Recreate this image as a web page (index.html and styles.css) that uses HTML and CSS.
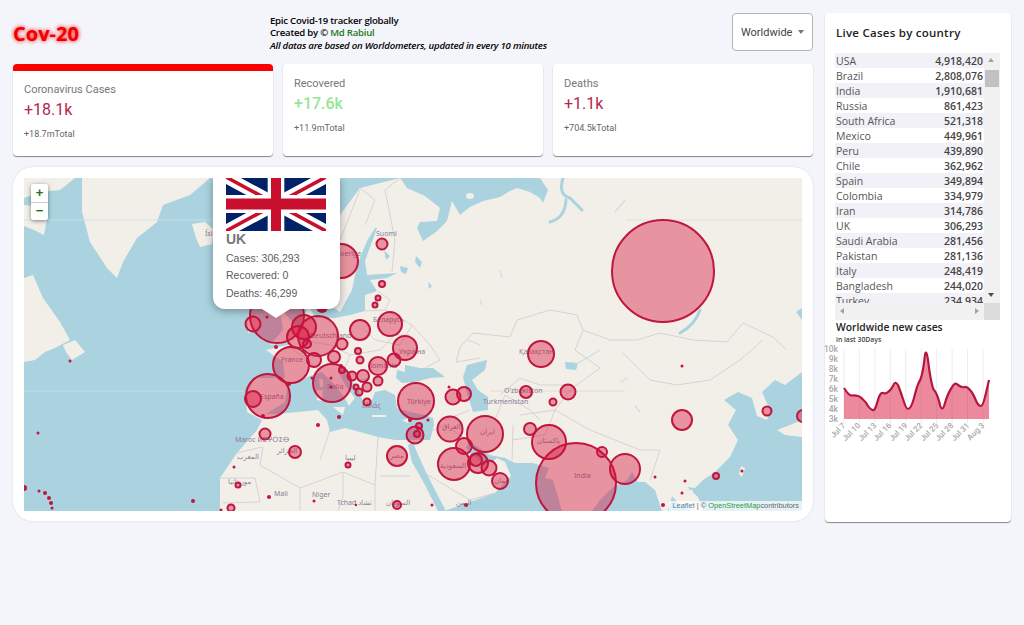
FILE: index.html
```html
<!DOCTYPE html>
<html lang="en">
<head>
<meta charset="utf-8">
<title>Cov-20</title>
<link rel="stylesheet" href="styles.css">
</head>
<body>
<div class="app">
  <main class="left">
    <header class="header">
      <h1 class="brand">Cov-20</h1>
      <div class="intro">
        <div>Epic Covid-19 tracker globally</div>
        <div>Created by © <span class="author">Md Rabiul</span></div>
        <div class="note">All datas are based on Worldometers, updated in every 10 minutes</div>
      </div>
      <div class="select">Worldwide <span class="caret"></span></div>
    </header>
    <section class="stats">
      <article class="stat stat-active">
        <div class="stat-label">Coronavirus Cases</div>
        <div class="stat-value">+18.1k</div>
        <div class="stat-total">+18.7mTotal</div>
      </article>
      <article class="stat">
        <div class="stat-label">Recovered</div>
        <div class="stat-value green">+17.6k</div>
        <div class="stat-total">+11.9mTotal</div>
      </article>
      <article class="stat">
        <div class="stat-label">Deaths</div>
        <div class="stat-value">+1.1k</div>
        <div class="stat-total">+704.5kTotal</div>
      </article>
    </section>
    <section class="map-card">
      <div class="map">
        <svg class="map-svg" viewBox="24 178 778 333" width="778" height="333" aria-label="World map">
          <g class="base">
          <path class="land" d="M400 178 L407 188 L425 196 L440 208 L437 221 L420 222 L417 228 L423 241 L436 232 L447 221 L452 201 L460 215 L470 207 L483 201 L500 197 L510 191 L517 188 L530 192 L540 198 L543 203 L548 190 L540 178 L802 178 L802 308 L796 312 L802 320 L802 372 L785 385 L775 380 L762 392 L770 410 L767 420 L757 416 L752 398 L738 392 L724 400 L736 410 L728 425 L738 440 L730 457 L715 472 L703 480 L695 488 L687 487 L698 497 L703 511 L690 511 L680 505 L672 496 L668 511 L662 511 L655 490 L645 482 L638 482 L632 472 L627 480 L613 487 L600 500 L592 511 L562 511 L553 480 L545 478 L549 468 L533 463 L515 463 L505 458 L490 455 L478 447 L470 442 L466 447 L470 455 L478 458 L483 465 L492 462 L497 458 L505 462 L511 476 L495 493 L470 502 L447 510 L440 511 L220 511 L220 478 L237 453 L257 430 L262 420 L247 412 L246 395 L255 378 L285 378 L283 362 L266 350 L287 345 L300 335 L303 322 L308 305 L316 318 L335 318 L350 315 L365 311 L365 295 L377 291 L370 280 L387 278 L397 273 L367 275 L365 261 L377 228 L375 228 L367 241 L357 265 L352 290 L340 312 L330 305 L325 295 L318 298 L305 295 L298 275 L310 240 L340 215 L360 188 Z"/>
          <path class="land" d="M82 178 L210 178 L190 195 L163 205 L157 222 L137 238 L123 262 L117 278 L107 268 L90 242 L82 212 Z"/>
          <path class="land" d="M192 224 L205 222 L214 230 L212 244 L200 247 L196 238 Z"/>
          <path class="land" d="M24 278 L33 275 L43 298 L60 322 L70 340 L55 348 L45 352 L35 360 L24 362 Z"/>
          <path class="land" d="M63 345 L75 340 L85 352 L72 360 L66 352 Z"/>
          <path class="land" d="M24 178 L75 178 L60 190 L40 192 L24 198 Z"/>
          <path class="land" d="M24 205 L38 206 L47 218 L44 235 L34 230 L24 226 Z"/>
          <path class="land" d="M280 308 L295 325 L302 335 L290 342 L270 345 L283 330 Z"/>
          <path class="land" d="M247 318 L258 315 L260 330 L248 333 Z"/>
          <path class="land" d="M777 430 L790 425 L802 420 L802 437 L785 435 Z"/>
          <path class="land" d="M741 466 L745 468 L742 477 L739 474 Z"/>
          <path class="land" d="M686 491 L693 490 L693 496 L688 497 Z"/>
          <ellipse class="land" cx="470" cy="196" rx="4" ry="3"/>
          <path class="sea" d="M266 414 L285 402 L288 385 L310 376 L322 372 L335 385 L345 398 L349 406 L345 412 L351 403 L355 398 L347 388 L338 372 L340 366 L350 378 L358 390 L365 405 L372 400 L375 392 L385 390 L395 395 L397 408 L410 412 L425 415 L433 418 L434 425 L430 440 L410 440 L395 440 L378 437 L360 432 L345 428 L330 432 L327 420 L318 410 L277 414 Z"/>
          <path class="land" d="M333 407 L345 407 L343 415 Z M317 390 L323 390 L322 401 L317 400 Z M319 379 L323 379 L323 387 L320 387 Z M372 415 L386 415 L386 417 L372 417 Z M402 420 L410 418 L408 423 Z"/>
          <path class="sea" d="M397 370 L405 372 L405 365 L420 368 L433 368 L445 377 L430 378 L415 382 L402 383 L396 378 Z"/>
          <path class="sea" d="M467 365 L487 360 L485 370 L472 380 L478 390 L488 397 L488 410 L473 412 L467 393 L463 377 Z"/>
          <path class="sea" d="M565 362 L578 363 L576 370 L566 369 Z"/>
          <path class="sea" d="M413 442 L416 450 L425 470 L435 490 L446 511 L438 511 L425 485 L412 462 L408 445 Z"/>
          <path class="sea" d="M400 266 L408 268 L406 274 L401 272 Z M416 256 L422 262 L420 268 L415 262 Z M384 250 L390 256 L386 260 Z M428 282 L432 286 L429 289 Z"/>
          <path class="water-line" d="M563 178 Q558 195 570 198 L582 210 M566 200 Q565 218 550 222"/>
          <path class="water-line" d="M700 310 Q695 325 680 333"/>
          <path class="water-thin" d="M625 200 L615 212 M468 340 L480 345 M575 365 L600 350 M620 382 L628 378 M635 406 L640 412 M480 300 L482 305 M500 270 L502 278"/>
          <path class="lat" d="M24 220 L212 220"/>
          <path class="lat-grey" d="M626 220 L802 220"/>
          <path class="lat" d="M24 391 L244 391"/>
          <path class="lat-grey" d="M490 391 L625 391"/>
          <path class="border" d="M460 347 L473 333 L510 337 L517 320 L550 310 L577 315 L583 330 L610 340 L637 340 L660 333 L693 340 L727 342 L743 323 L773 337 L787 350"/>
          <path class="border" d="M623 353 L650 380 L677 385 L710 380 L740 360 L763 340"/>
          <path class="border" d="M583 330 L575 350 L600 368 L570 390 L555 410 L590 430 L640 450 L660 450 L650 480"/>
          <path class="border" d="M460 347 L456 362 L480 358 M500 395 L520 378 L540 385 L570 385 M495 420 L505 395 L530 410 L540 420 M513 425 L512 460 M520 415 L555 410 L545 435 L512 440"/>
          <path class="border" d="M400 178 L385 190 L395 240 L392 272 M360 188 L375 200 L365 225 M340 240 L360 190"/>
          <path class="border" d="M300 340 L330 345 L350 355 L380 350 L395 335 L410 335 M365 311 L385 310 L412 325 L400 345 L375 340 L365 330 M412 325 L430 345 L440 360 L425 368 M378 291 L390 300 L385 310 M287 345 L310 362 L320 372 M350 355 L345 368 L360 380 L370 378"/>
          <path class="border" d="M260 465 L300 488 L343 472 L375 485 L378 437 M320 460 L330 430 M260 465 L263 447 M220 478 L255 478 L260 502 L223 503 M300 488 L300 511 M343 472 L343 497 L338 511 M375 485 L375 511 M380 476 L410 476 M411 440 L445 425 L470 442 M428 475 L470 500 L495 493 M445 420 L470 410 M237 453 L262 447"/>
          </g>
          <g class="lbl">
            <text x="205" y="236">Ísland</text>
            <text x="376" y="236">Suomi</text>
            <text x="337" y="256">Sverige</text>
            <text x="310" y="338">Deutschland</text>
            <text x="373" y="322">Беларусь</text>
            <text x="399" y="354">Україна</text>
            <text x="281" y="362">France</text>
            <text x="260" y="399">España</text>
            <text x="327" y="389">Italia</text>
            <text x="368" y="368">România</text>
            <text x="362" y="408">Ελλάς</text>
            <text x="407" y="404">Türkiye</text>
            <text x="519" y="354">Қазақстан</text>
            <text x="504" y="393">O'zbekiston</text>
            <text x="483" y="404">Turkmenistan</text>
            <text x="574" y="478">India</text>
            <text x="235" y="442">Maroc ⵍⵎⵖⵔⵉⴱ</text>
            <text x="237" y="459">المغرب</text>
            <text x="277" y="453">الجزائر</text>
            <text x="345" y="460">ليبيا</text>
            <text x="228" y="484">موريتانيا</text>
            <text x="274" y="496">Mali</text>
            <text x="312" y="497">Niger</text>
            <text x="337" y="505">Tchad تشاد</text>
            <text x="386" y="505">السودان</text>
            <text x="390" y="458">مصر</text>
            <text x="442" y="429">العراق</text>
            <text x="480" y="434">ایران</text>
            <text x="440" y="468">السعودية</text>
            <text x="537" y="443">پاکستان</text>
            <text x="494" y="483">عمان</text>
            <text x="456" y="505">اليمن</text>
          </g>
          <g class="dots">
            <circle cx="663" cy="271" r="51"/><circle cx="576" cy="483" r="40"/>
            <circle cx="277" cy="316" r="27"/><circle cx="268" cy="396" r="22"/><circle cx="318" cy="336" r="20"/><circle cx="291" cy="365" r="18"/><circle cx="332" cy="383" r="19"/><circle cx="416" cy="401" r="18"/><circle cx="341" cy="261" r="17"/><circle cx="549" cy="442" r="17"/><circle cx="485" cy="434" r="18"/><circle cx="454" cy="464" r="16"/><circle cx="625" cy="469" r="15"/><circle cx="541" cy="354" r="13"/><circle cx="450" cy="429" r="12.5"/><circle cx="390" cy="324" r="12"/><circle cx="405" cy="348" r="12"/><circle cx="304" cy="327" r="12"/><circle cx="298" cy="337" r="11"/><circle cx="360" cy="330" r="10"/><circle cx="397" cy="456" r="10"/><circle cx="682" cy="420" r="10"/><circle cx="478" cy="463" r="10"/>
            <circle cx="378" cy="366" r="9"/><circle cx="415" cy="435" r="8.5"/><circle cx="253" cy="399" r="8"/><circle cx="464" cy="446" r="8"/><circle cx="500" cy="481" r="8"/><circle cx="253" cy="324" r="7.5"/><circle cx="489" cy="468" r="7.5"/><circle cx="453" cy="397" r="7.5"/><circle cx="568" cy="392" r="7.5"/><circle cx="314" cy="360" r="7"/><circle cx="464" cy="394" r="7"/><circle cx="334" cy="357" r="6"/><circle cx="363" cy="376" r="6"/><circle cx="295" cy="452" r="6"/><circle cx="526" cy="392" r="6"/><circle cx="530" cy="429" r="6"/><circle cx="476" cy="460" r="6"/><circle cx="394" cy="360" r="6.5"/><circle cx="265" cy="434" r="5.5"/><circle cx="342" cy="344" r="5.5"/><circle cx="382" cy="244" r="5.5"/><circle cx="602" cy="452" r="5"/><circle cx="352" cy="376" r="4.5"/><circle cx="378" cy="381" r="4.5"/><circle cx="367" cy="387" r="4.5"/><circle cx="767" cy="411" r="4.5"/><circle cx="803" cy="416" r="6"/><circle cx="397" cy="505" r="4"/><circle cx="307" cy="344" r="4"/>
            <circle cx="360" cy="360" r="3.5"/><circle cx="359" cy="392" r="3.5"/><circle cx="367" cy="402" r="3.5"/><circle cx="553" cy="402" r="3.5"/><circle cx="231" cy="508" r="3.5"/><circle cx="358" cy="351" r="3"/><circle cx="342" cy="370" r="3"/><circle cx="382" cy="284" r="3"/><circle cx="417" cy="434" r="3"/><circle cx="419" cy="426" r="3"/><circle cx="716" cy="476" r="3"/><circle cx="378" cy="298" r="2.5"/><circle cx="375" cy="305" r="2.5"/><circle cx="356" cy="387" r="2.5"/><circle cx="348" cy="465" r="2.5"/><circle cx="238" cy="485" r="2.5"/>
          </g>
          <g class="pins">
            <circle cx="339" cy="417" r="2"/><circle cx="318" cy="425" r="2"/><circle cx="234" cy="467" r="1.5"/><circle cx="269" cy="497" r="2"/><circle cx="314" cy="501" r="1.5"/><circle cx="356" cy="505" r="1.2"/><circle cx="221" cy="510" r="1.5"/><circle cx="193" cy="501" r="2"/><circle cx="70" cy="361" r="1.5"/><circle cx="38" cy="433" r="1.5"/><circle cx="39" cy="491" r="1.5"/><circle cx="45" cy="493" r="2"/><circle cx="49" cy="498" r="2"/><circle cx="51" cy="503" r="2"/><circle cx="52" cy="508" r="1.5"/><circle cx="24" cy="488" r="3"/><circle cx="449" cy="387" r="1.5"/><circle cx="466" cy="505" r="2"/><circle cx="432" cy="505" r="1.5"/><circle cx="428" cy="420" r="1.5"/><circle cx="410" cy="420" r="2"/><circle cx="682" cy="366" r="1.5"/><circle cx="742" cy="471" r="1.5"/><circle cx="655" cy="477" r="1.5"/><circle cx="685" cy="481" r="1.5"/><circle cx="682" cy="493" r="1.5"/><circle cx="663" cy="505" r="2"/><circle cx="267" cy="317" r="1.5"/><circle cx="276" cy="347" r="2"/><circle cx="263" cy="416" r="2"/><circle cx="289" cy="384" r="2"/><circle cx="312" cy="378" r="1.5"/><circle cx="331" cy="378" r="1.5"/><circle cx="331" cy="387" r="1.5"/><circle cx="341" cy="366" r="2"/><circle cx="322" cy="307" r="6"/>
          </g>
        </svg>
        <div class="zoom-ctl">
          <button class="zoom-btn">+</button>
          <button class="zoom-btn">−</button>
        </div>
        <div class="popup">
          <svg class="flag" viewBox="0 0 60 30" preserveAspectRatio="none" aria-label="UK flag">
            <rect class="flag-blue" width="60" height="30"/>
            <path class="flag-white-x" d="M0 0 L60 30 M60 0 L0 30"/>
            <path class="flag-red-x" d="M0 0 L60 30 M60 0 L0 30"/>
            <path class="flag-white-p" d="M30 0 V30 M0 15 H60"/>
            <path class="flag-red-p" d="M30 0 V30 M0 15 H60"/>
          </svg>
          <div class="popup-name">UK</div>
          <div class="popup-line">Cases: 306,293</div>
          <div class="popup-line">Recovered: 0</div>
          <div class="popup-line">Deaths: 46,299</div>
        </div>
        <div class="attrib"><span class="a-leaflet">Leaflet</span> | © <span class="a-osm">OpenStreetMap</span>contributors</div>
      </div>
    </section>
  </main>
  <aside class="side">
    <h2 class="side-title">Live Cases by country</h2>
    <div class="table-box">
      <div class="table-main">
        <div class="rows">
          <div class="row"><span>USA</span><b>4,918,420</b></div>
          <div class="row"><span>Brazil</span><b>2,808,076</b></div>
          <div class="row"><span>India</span><b>1,910,681</b></div>
          <div class="row"><span>Russia</span><b>861,423</b></div>
          <div class="row"><span>South Africa</span><b>521,318</b></div>
          <div class="row"><span>Mexico</span><b>449,961</b></div>
          <div class="row"><span>Peru</span><b>439,890</b></div>
          <div class="row"><span>Chile</span><b>362,962</b></div>
          <div class="row"><span>Spain</span><b>349,894</b></div>
          <div class="row"><span>Colombia</span><b>334,979</b></div>
          <div class="row"><span>Iran</span><b>314,786</b></div>
          <div class="row"><span>UK</span><b>306,293</b></div>
          <div class="row"><span>Saudi Arabia</span><b>281,456</b></div>
          <div class="row"><span>Pakistan</span><b>281,136</b></div>
          <div class="row"><span>Italy</span><b>248,419</b></div>
          <div class="row"><span>Bangladesh</span><b>244,020</b></div>
          <div class="row"><span>Turkey</span><b>234,934</b></div>
        </div>
        <div class="vbar">
          <span class="arrow arrow-up"></span>
          <span class="thumb"></span>
          <span class="arrow arrow-down"></span>
        </div>
      </div>
      <div class="hbar">
        <div class="hbar-track"><span class="arrow arrow-left"></span><span class="arrow arrow-right"></span></div>
        <div class="hbar-corner"></div>
      </div>
    </div>
    <h3 class="chart-title">Worldwide new cases</h3>
    <div class="chart-sub">in last 30Days</div>
    <svg class="chart" viewBox="824 345 177 105" width="177" height="105" aria-label="New cases chart">
      <g class="grid">
        <path d="M844 349V424 M859.4 349V424 M874.9 349V424 M890.3 349V424 M905.8 349V424 M921.2 349V424 M936.7 349V424 M952.1 349V424 M967.6 349V424 M983 349V424"/>
      </g>
      <path class="area" d="M844 388 Q849 396 852 395.5 Q855 395 858 396 Q861 397 863 399.5 Q866 402 868 406 Q870 409 872.5 410 Q875 411.5 877.5 401.5 Q880 392 883 393 Q886 394 888 392 Q891 390 893 386 Q895 380 898 385 Q900 390 903 399 Q906 409 908 409 Q911 409 914 398 Q917 386 919 382 Q922 378 924 363 Q926 340 929 368 Q932 388 934 390 Q937 393 939.5 403 Q942 414 945 403 Q948 393 951.5 388 Q955 381 958 385 Q962 388 964.5 387 Q967 386 970 390 Q973 393 975.5 399.5 Q978 406 981 406 Q983 406 986 393 L989 380 V419 H844 Z"/>
      <path class="curve" d="M844 388 Q849 396 852 395.5 Q855 395 858 396 Q861 397 863 399.5 Q866 402 868 406 Q870 409 872.5 410 Q875 411.5 877.5 401.5 Q880 392 883 393 Q886 394 888 392 Q891 390 893 386 Q895 380 898 385 Q900 390 903 399 Q906 409 908 409 Q911 409 914 398 Q917 386 919 382 Q922 378 924 363 Q926 340 929 368 Q932 388 934 390 Q937 393 939.5 403 Q942 414 945 403 Q948 393 951.5 388 Q955 381 958 385 Q962 388 964.5 387 Q967 386 970 390 Q973 393 975.5 399.5 Q978 406 981 406 Q983 406 986 393 L989 380"/>
      <g class="y-labels">
        <text x="838" y="352">10k</text><text x="838" y="362">9k</text><text x="838" y="372">8k</text><text x="838" y="382">7k</text><text x="838" y="392">6k</text><text x="838" y="402">5k</text><text x="838" y="412">4k</text><text x="838" y="422">3k</text>
      </g>
      <g class="x-labels">
        <text transform="translate(846 426) rotate(-45)">Jul 7</text>
        <text transform="translate(861 426) rotate(-45)">Jul 10</text>
        <text transform="translate(877 426) rotate(-45)">Jul 13</text>
        <text transform="translate(892 426) rotate(-45)">Jul 16</text>
        <text transform="translate(908 426) rotate(-45)">Jul 19</text>
        <text transform="translate(923 426) rotate(-45)">Jul 22</text>
        <text transform="translate(939 426) rotate(-45)">Jul 25</text>
        <text transform="translate(954 426) rotate(-45)">Jul 28</text>
        <text transform="translate(970 426) rotate(-45)">Jul 31</text>
        <text transform="translate(985 426) rotate(-45)">Aug 3</text>
      </g>
    </svg>
  </aside>
</div>
</body>
</html>
```

FILE: styles.css
```css
* { box-sizing: border-box; }
html, body { margin: 0; height: 100%; }
body { background: #f4f5fb; font-family: Roboto, "Liberation Sans", sans-serif; overflow: hidden; }
.app { display: flex; gap: 12px; padding: 13px 13px 0; align-items: flex-start; }
.left { width: 800px; display: flex; flex-direction: column; }

.header { display: flex; align-items: flex-start; height: 38px; margin-bottom: 13px; }
.brand { margin: 8px 0 0; width: 257px; font: 700 20px/26px "Open Sans", sans-serif; color: #ee0000; text-shadow: 0 0 4px #f00; }
.intro { flex: 1; padding-top: 2px; font: 600 9.6px/12.3px "Open Sans", sans-serif; letter-spacing: -.23px; color: #000; }
.author { color: #1b7a1b; }
.note { font-style: italic; }
.select { width: 81px; height: 38px; border: 1px solid #b5b5b5; border-radius: 4px; padding-left: 8px; display: flex; align-items: center; font-size: 11px; color: #444; background: #fff; }
.caret { margin-left: 6px; border: 3.5px solid transparent; border-top: 4px solid #777; border-bottom: 0; }

.stats { display: flex; gap: 10px; margin-bottom: 11px; }
.stat { flex: 1; height: 92px; background: #fff; border-radius: 4px; padding: 13px 11px; box-shadow: 0 1px 1px rgba(0,0,0,.45); }
.stat-active { border-top: 7px solid #f00; padding-top: 12px; }
.stat-label { font-size: 11px; line-height: 13px; color: #777; }
.stat-value { margin-top: 3px; font-size: 16px; line-height: 21px; color: #b3274c; }
.stat-value.green { color: #97e597; font-weight: 500; }
.stat-total { margin-top: 9px; font-size: 9px; line-height: 11px; color: #666; }

.map-card { height: 354px; background: #fff; border-radius: 20px; padding: 11px; box-shadow: 0 0 2px rgba(0,0,0,.15); }
.map { position: relative; width: 778px; height: 333px; overflow: hidden; background: #aad3df; }
.map-svg { display: block; }
.base { filter: blur(.5px); }
.land { fill: #f2efe9; }
.sea { fill: #aad3df; }
.water-line { fill: none; stroke: #aad3df; stroke-width: 3; stroke-linecap: round; }
.water-thin { fill: none; stroke: #c6e0e6; stroke-width: 1.2; }
.lat { fill: none; stroke: #c8e1e8; stroke-width: .8; }
.lat-grey { fill: none; stroke: #dcdad6; stroke-width: .8; }
.border { fill: none; stroke: #d6cdd2; stroke-width: .9; }
.lbl text { font: 7px "Noto Sans", "DejaVu Sans", sans-serif; fill: #8a7c99; }
.dots circle { fill: rgba(220, 20, 60, .42); stroke: #c0153f; stroke-width: 2; }
.pins circle { fill: #c0153f; }

.zoom-ctl { position: absolute; left: 7px; top: 6px; width: 17px; height: 36px; display: flex; flex-direction: column; border-radius: 3px; background: #fff; box-shadow: 0 1px 4px rgba(0,0,0,.45); overflow: hidden; }
.zoom-btn { flex: 1; padding: 0; border: 0; background: #fff; color: #1b6f1b; font: 700 13px/16px "Liberation Sans", sans-serif; }
.zoom-btn + .zoom-btn { border-top: 1px solid #ccc; }

.popup { position: absolute; left: 189px; top: -1px; width: 127px; height: 132px; padding-left: 13px; background: #fff; border-radius: 0 0 12px 12px; box-shadow: 0 2px 8px rgba(0,0,0,.35); font-family: "Liberation Sans", sans-serif; color: #666; }
.popup::after { content: ""; position: absolute; left: 49px; bottom: -9px; border: 14px solid transparent; border-top: 9px solid #fff; border-bottom: 0; }
.flag { display: block; width: 100px; height: 54px; }
.flag-blue { fill: #012169; }
.flag-white-x { fill: none; stroke: #fff; stroke-width: 7; }
.flag-red-x { fill: none; stroke: #c8102e; stroke-width: 2; }
.flag-white-p { fill: none; stroke: #fff; stroke-width: 10; }
.flag-red-p { fill: none; stroke: #c8102e; stroke-width: 6; }
.popup-name { margin-top: 0; font-size: 14px; line-height: 16px; font-weight: 700; color: #777; }
.popup-line { margin-top: 3.5px; font-size: 10.5px; line-height: 14px; color: #5c5c5c; }
.attrib { position: absolute; right: 0; bottom: 0; padding: 0 3px; font: 7.4px/10px "Liberation Sans", sans-serif; color: #666; background: rgba(255,255,255,.7); }
.a-leaflet { color: #4a7fa5; }
.a-osm { color: #2d9a3c; }

.side { width: 186px; height: 509px; background: #fff; border-radius: 4px; padding: 0 11px 0 10px; box-shadow: 0 1px 1px rgba(0,0,0,.45); }
.side-title { margin: 12px 0 12px 1px; font: 600 11.5px/16px "Open Sans", sans-serif; letter-spacing: .25px; color: #222; }
.table-box { width: 165px; }
.table-main { display: flex; height: 250px; }
.rows { width: 149px; overflow: hidden; }
.row { display: flex; justify-content: space-between; height: 15px; padding: 0 1px; font: 400 10.5px/16.5px "Open Sans", sans-serif; color: #555; }
.row:nth-child(odd) { background: #f2f1f7; }
.row b { font-weight: 600; color: #444; }
.vbar { position: relative; width: 16px; background: #f1f1f1; }
.thumb { position: absolute; left: 1px; top: 17px; width: 14px; height: 17px; background: #c1c1c1; }
.arrow { position: absolute; width: 0; height: 0; border: 3.5px solid transparent; }
.arrow-up { left: 4px; top: 5px; border-top: 0; border-bottom: 4px solid #a3a3a3; }
.arrow-down { left: 4px; bottom: 6px; border-bottom: 0; border-top: 4px solid #505050; }
.hbar { display: flex; height: 17px; }
.hbar-track { position: relative; width: 149px; background: #f1f1f1; }
.hbar-corner { width: 16px; background: #dcdcdc; }
.arrow-left { left: 5px; top: 5px; border-left: 0; border-right: 4px solid #a3a3a3; }
.arrow-right { right: 5px; top: 5px; border-right: 0; border-left: 4px solid #a3a3a3; }
.chart-title { margin: 0 0 0 1px; font: 600 10.3px/14px "Open Sans", sans-serif; color: #222; }
.chart-sub { margin: 0 0 0 1px; font: 600 6.8px/11px "Open Sans", sans-serif; color: #444; }
.chart { display: block; margin: 0 0 0 -11px; overflow: visible; }
.grid path { fill: none; stroke: #ececec; stroke-width: 1; }
.area { fill: rgba(220, 20, 60, .5); }
.curve { fill: none; stroke: #b3173f; stroke-width: 2.2; }
.y-labels text { font: 500 8.5px Roboto, sans-serif; fill: #a8a8a8; text-anchor: end; }
.x-labels text { font: 500 8px Roboto, sans-serif; fill: #a8a8a8; text-anchor: end; }
```
